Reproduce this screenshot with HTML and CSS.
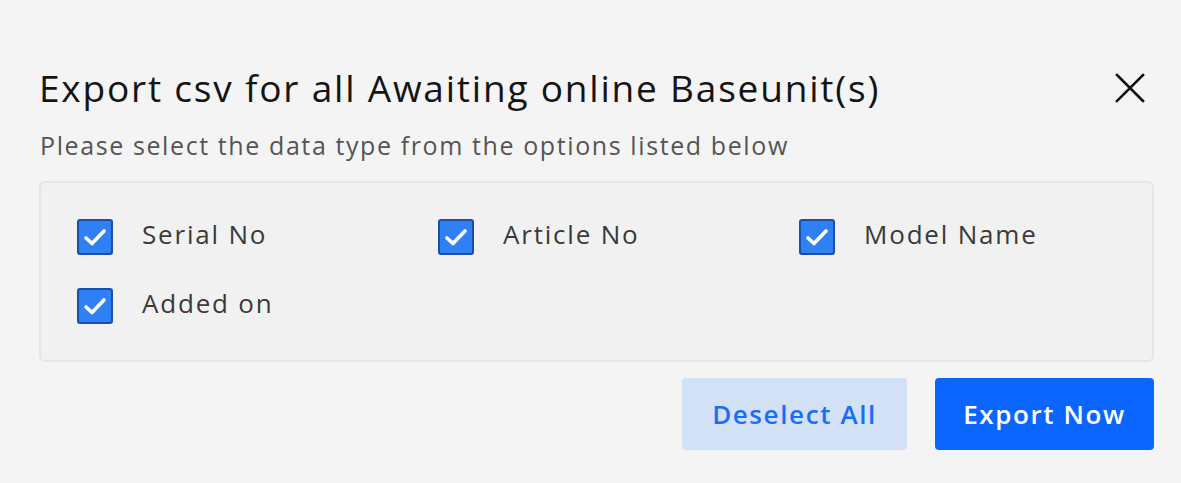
FILE: index.html
```html
<!DOCTYPE html>
<html>
<head>
<meta charset="utf-8">
<link rel="stylesheet" href="styles.css">
</head>
<body>
<div class="dialog">
  <div class="header">
    <h1 class="title">Export csv for all Awaiting online Baseunit(s)</h1>
    <button class="close" aria-label="Close">
      <svg width="30" height="30" viewBox="0 0 30 30"><path d="M2 2L28 28M28 2L2 28" stroke="#111" stroke-width="2.6" stroke-linecap="square"/></svg>
    </button>
  </div>
  <p class="subtitle">Please select the data type from the options listed below</p>
  <div class="options">
    <label class="option"><span class="cb"><svg width="24" height="20" viewBox="0 0 24 20"><path d="M3 11L9 16.5L21 4" fill="none" stroke="#fff" stroke-width="3.6" stroke-linecap="round" stroke-linejoin="round"/></svg></span><span class="label">Serial No</span></label>
    <label class="option"><span class="cb"><svg width="24" height="20" viewBox="0 0 24 20"><path d="M3 11L9 16.5L21 4" fill="none" stroke="#fff" stroke-width="3.6" stroke-linecap="round" stroke-linejoin="round"/></svg></span><span class="label">Article No</span></label>
    <label class="option"><span class="cb"><svg width="24" height="20" viewBox="0 0 24 20"><path d="M3 11L9 16.5L21 4" fill="none" stroke="#fff" stroke-width="3.6" stroke-linecap="round" stroke-linejoin="round"/></svg></span><span class="label">Model Name</span></label>
    <label class="option"><span class="cb"><svg width="24" height="20" viewBox="0 0 24 20"><path d="M3 11L9 16.5L21 4" fill="none" stroke="#fff" stroke-width="3.6" stroke-linecap="round" stroke-linejoin="round"/></svg></span><span class="label">Added on</span></label>
  </div>
  <div class="actions">
    <button class="btn btn-secondary">Deselect All</button>
    <button class="btn btn-primary">Export Now</button>
  </div>
</div>
</body>
</html>
```
FILE: styles.css
```css
html, body {
  margin: 0;
  padding: 0;
  background: #f4f4f4;
}
body {
  font-family: "Open Sans", "Noto Sans", sans-serif;
  color: #1a1a1a;
  width: 1181px;
  height: 483px;
  overflow: hidden;
}
.dialog {
  padding: 58px 27px 0 39px;
}
.header {
  display: flex;
  align-items: center;
  justify-content: space-between;
  height: 60px;
}
.title {
  margin: 0;
  font-size: 37px;
  font-weight: 400;
  color: #141414;
  letter-spacing: 1.8px;
  line-height: 60px;
}
.close {
  background: none;
  border: none;
  padding: 0;
  margin-right: 9px;
  width: 30px;
  height: 30px;
  display: flex;
}
.subtitle {
  margin: 10px 0 0 1px;
  font-size: 25px;
  color: #555;
  line-height: 34px;
  letter-spacing: 1.6px;
}
.options {
  margin-top: 19px;
  background: #f1f1f1;
  border: 2px solid #e6e6e6;
  border-radius: 6px;
  display: grid;
  grid-template-columns: 361px 361px 1fr;
  row-gap: 33px;
  padding: 36px 0 36px 36px;
}
.option {
  display: flex;
  align-items: center;
  height: 36px;
}
.cb {
  width: 32px;
  height: 32px;
  background: #2f80f5;
  border: 2px solid #1a4fa8;
  border-radius: 3px;
  display: flex;
  align-items: center;
  justify-content: center;
  flex: none;
}
.label {
  margin-left: 29px;
  font-size: 26px;
  color: #3a3a3a;
  line-height: 36px;
  letter-spacing: 1.8px;
  padding-bottom: 7px;
}
.actions {
  display: flex;
  justify-content: flex-end;
  gap: 28px;
  margin-top: 16px;
}
.btn {
  height: 72px;
  border: none;
  border-radius: 4px;
  font-family: inherit;
  font-size: 26px;
  font-weight: 600;
  letter-spacing: 1.6px;
  cursor: pointer;
}
.btn-secondary {
  width: 225px;
  background: #d3e1f7;
  color: #1a6ef5;
}
.btn-primary {
  width: 219px;
  background: #0a66ff;
  color: #fff;
}
```
